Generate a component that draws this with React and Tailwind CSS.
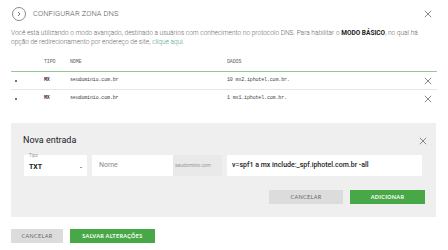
import React from 'react';

const XIcon = ({ size = 8, color = '#6b6b6b' }) => (
  <svg width={size} height={size} viewBox="0 0 10 10" fill="none">
    <path d="M1 1L9 9M9 1L1 9" stroke={color} strokeWidth="1" />
  </svg>
);

const rows = [
  { tipo: 'MX', nome: 'seudominio.com.br', dados: '10 mx2.iphotel.com.br.' },
  { tipo: 'MX', nome: 'seudominio.com.br', dados: '1 mx1.iphotel.com.br.' },
];

const mono = { fontFamily: '"Liberation Mono", "DejaVu Sans Mono", monospace' };

export default function App() {
  return (
    <div className="w-[448px] h-[250px] bg-white px-[11px] pt-[7px] text-[#555]" style={{ fontFamily: 'Roboto, "Noto Sans", sans-serif' }}>
      {/* header */}
      <div className="flex items-center justify-between h-[14px]">
        <div className="flex items-center">
          <div className="w-[14px] h-[14px] rounded-full border border-[#8a8a8a] flex items-center justify-center ml-[1px]">
            <svg width="6" height="6" viewBox="0 0 6 6" fill="none">
              <path d="M2 1L4 3L2 5" stroke="#666" strokeWidth="0.9" />
            </svg>
          </div>
          <span className="ml-[7px] text-[7.5px] font-light text-[#555] tracking-[0.1px]">CONFIGURAR ZONA DNS</span>
        </div>
        <div className="mr-[5px]">
          <XIcon size={8} />
        </div>
      </div>

      {/* description */}
      <p className="mt-[8px] text-[6.55px] leading-[9px] text-[#666] font-light whitespace-nowrap">
        Você está utilizando o modo avançado, destinado a usuários com conhecimento no protocolo DNS. Para habilitar o{' '}
        <b className="font-bold text-[#222]">MODO BÁSICO</b>, no qual há
        <br />
        opção de redirecionamento por endereço de site, <span className="text-[#4fa08a]">clique aqui.</span>
      </p>

      {/* table */}
      <div className="mt-[7px] w-[426px]" style={mono}>
        <div className="flex items-center h-[18px] border-b border-[#93c993] text-[5px] tracking-[-0.15px] text-[#666]">
          <div className="w-[33px]" />
          <div className="w-[26px]">TIPO</div>
          <div className="w-[157px]">NOME</div>
          <div className="flex-1">DADOS</div>
        </div>
        {rows.map((r, i) => (
          <div key={i} className={`flex items-center h-[18px] text-[5px] tracking-[-0.15px] text-[#444] ${i === 0 ? 'border-b border-[#e6e6e6]' : ''}`}>
            <div className="w-[33px] pl-[4px]">
              <div className="w-[2px] h-[2px] bg-[#3c9a3c]" />
            </div>
            <div className="w-[26px] font-bold text-[#333]">MX</div>
            <div className="w-[157px]">{r.nome}</div>
            <div className="flex-1">{r.dados}</div>
            <div className="mr-[5px]">
              <XIcon size={8} />
            </div>
          </div>
        ))}
      </div>

      {/* nova entrada panel */}
      <div className="mt-[15px] w-[425px] bg-[#efefef] pl-[13px] pr-[14px] pt-[11px] pb-[13px]">
        <div className="flex items-center justify-between h-[14px]">
          <span className="text-[9px] text-[#222] -ml-[1px]">Nova entrada</span>
          <div className="-mr-[5px]">
            <XIcon size={8} />
          </div>
        </div>
        <div className="mt-[7px] flex h-[21px]">
          <div className="relative w-[63px] bg-white flex items-center justify-between pl-[5px] pr-[5px]">
            <span className="absolute left-[5px] -top-[2px] text-[4.5px] text-[#999]">Tipo</span>
            <span className="text-[7px] font-bold text-[#222] mt-[3px]">TXT</span>
            <span className="w-[2px] h-[1px] bg-[#999] mt-[3px]" />
          </div>
          <div className="ml-[5px] w-[81px] bg-white flex items-center pl-[7px] text-[7px] text-[#888]">Nome</div>
          <div className="w-[49px] bg-[#e9e9e9] flex items-center pl-[2px] text-[5px] text-[#9a9a9a] tracking-[-0.1px]">seudominio.com</div>
          <div className="ml-[5px] flex-1 bg-white flex items-center pl-[5px] text-[7px] font-medium text-[#222]">
            v=spf1 a mx include:_spf.iphotel.com.br -all
          </div>
        </div>
        <div className="mt-[14px] flex justify-end gap-[7px] -mr-[3px]" style={{ fontFamily: 'Lato, Roboto, sans-serif' }}>
          <button className="w-[74px] h-[14px] bg-[#dcdcdc] text-[5.5px] text-[#666] tracking-[0.3px]">CANCELAR</button>
          <button className="w-[75px] h-[14px] bg-[#48a848] text-[5.5px] font-bold text-white tracking-[0.3px]">ADICIONAR</button>
        </div>
      </div>

      {/* bottom buttons */}
      <div className="mt-[12px] flex gap-[7px]" style={{ fontFamily: 'Lato, Roboto, sans-serif' }}>
        <button className="w-[52px] h-[14px] bg-[#dcdcdc] text-[5.5px] text-[#666] tracking-[0.3px]">CANCELAR</button>
        <button className="w-[85px] h-[14px] bg-[#48a848] text-[5.5px] font-bold text-white tracking-[0.3px]">SALVAR ALTERAÇÕES</button>
      </div>
    </div>
  );
}
